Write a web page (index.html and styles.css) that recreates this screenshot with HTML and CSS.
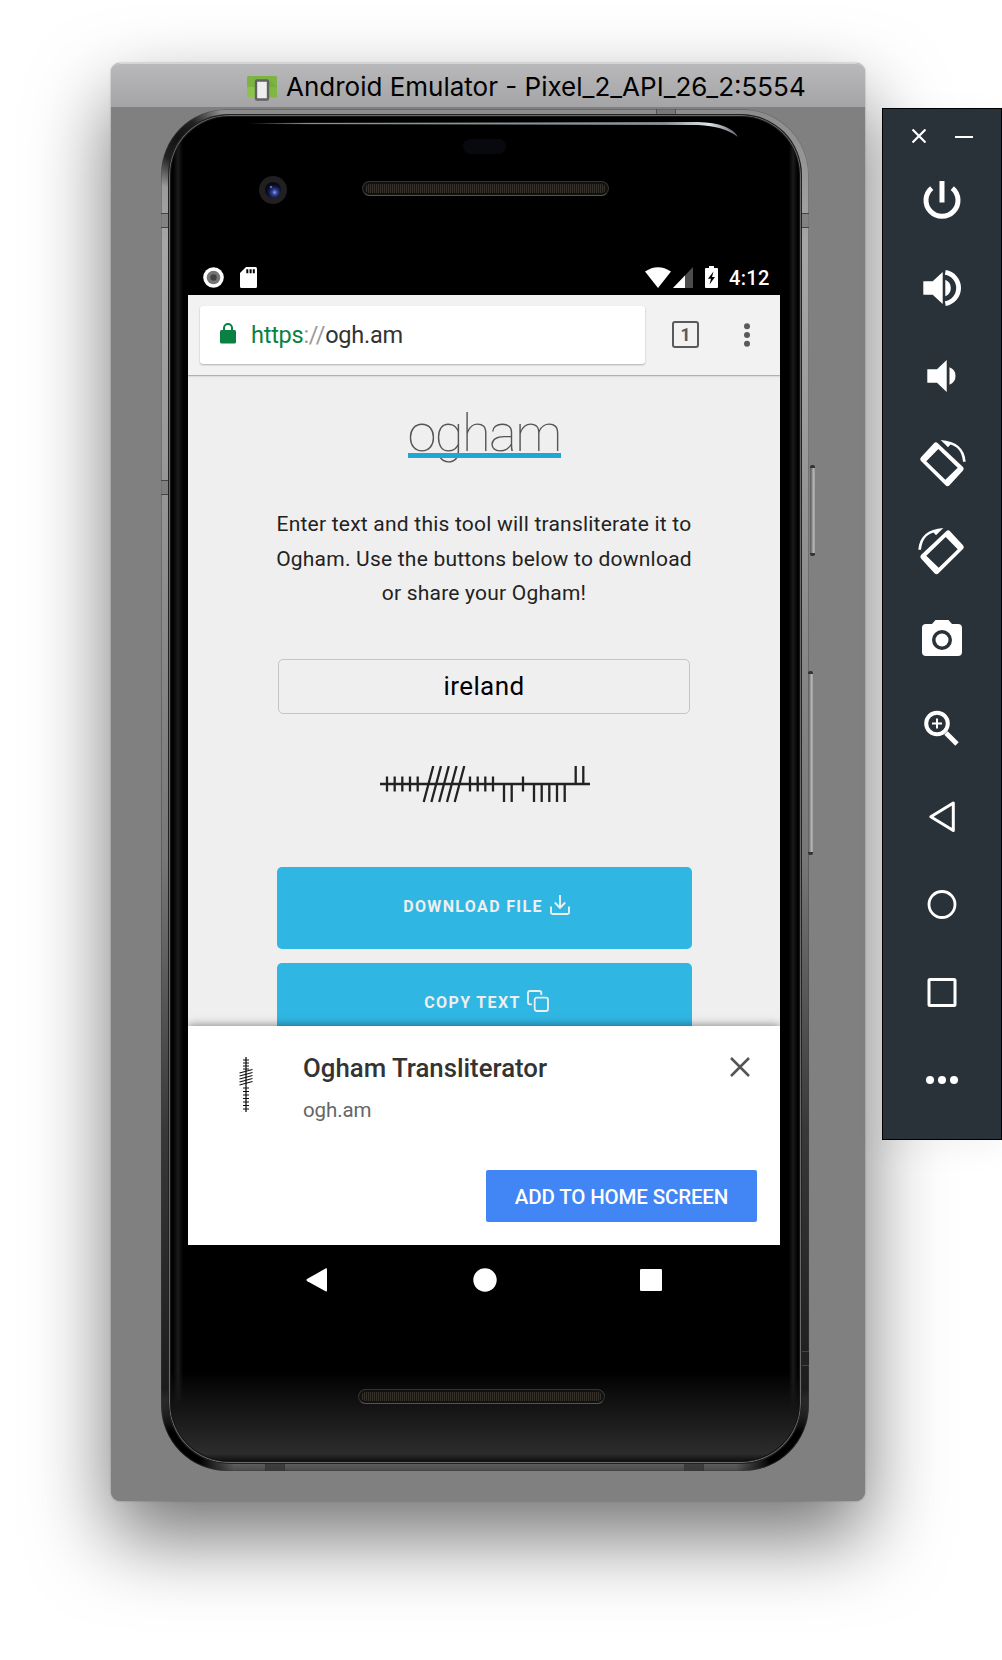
FILE: index.html
```html
<!DOCTYPE html>
<html lang="en">
<head>
<meta charset="utf-8">
<title>Android Emulator</title>
<link rel="stylesheet" href="styles.css">
</head>
<body>
<main class="desktop">
  <section class="window">
    <header class="titlebar">
      <svg class="app-icon" width="30" height="25" viewBox="0 0 30 25"><rect width="30" height="21.500" rx="1.500" fill="#8bc34a"/><path d="M0 11V1.500Q0 0 1.500 0h27Q30 0 30 1.500V11z" fill="#7cb342"/><path d="M22 4l8 7v10.500h-8z" fill="#6da137" opacity=".35"/><rect x="9" y="4.500" width="12" height="19" rx="1" fill="#eee" stroke="#616161" stroke-width="2.400"/></svg>
      <h1 class="window-title">Android Emulator - Pixel_2_API_26_2:5554</h1>
    </header>
    <div class="phone">
      <i class="band band-left"></i><i class="band band-right"></i><i class="band band-right low"></i><i class="band band-left mid"></i>
      <i class="seam seam-top"></i><i class="seam seam-bl"></i><i class="seam seam-br"></i>
      <i class="side-key power-key"></i><i class="side-key volume-key"></i>
      <div class="glass">
        <svg class="glare" width="500" height="20" viewBox="0 0 500 20"><defs><linearGradient id="g" x1="0" x2="1"><stop offset="0" stop-color="#889396" stop-opacity="0"/><stop offset=".12" stop-color="#889396"/><stop offset=".85" stop-color="#889396"/><stop offset=".94" stop-color="#dce5e8"/><stop offset="1" stop-color="#667" /></linearGradient></defs><path d="M0 2L450 1Q482 2 490 16Q476 5 450 4L0 3z" fill="url(#g)"/></svg>
        <i class="sensor"></i>
        <svg class="camera" width="28" height="28" viewBox="0 0 28 28"><defs><radialGradient id="c" cx=".6" cy=".65"><stop offset="0" stop-color="#8ea0f0"/><stop offset=".3" stop-color="#36469c"/><stop offset=".7" stop-color="#111a45"/><stop offset="1" stop-color="#080a18"/></radialGradient></defs><circle cx="14" cy="14" r="14" fill="#211f20"/><circle cx="14" cy="14" r="8" fill="url(#c)"/><circle cx="12" cy="11" r="1.300" fill="#5065bb"/></svg>
        <i class="speaker speaker-top"></i>
        <div class="statusbar">
          <svg width="21" height="21" viewBox="0 0 21 21"><circle cx="10.500" cy="10.500" r="10.300" fill="#fff"/><circle cx="10.500" cy="10.500" r="6.800" fill="#757575"/><circle cx="10.500" cy="10.500" r="3.200" fill="#424242"/></svg>
          <svg class="sd" width="17" height="21" viewBox="0 0 17 21"><path d="M6 0h9.500q1.500 0 1.500 1.500v18q0 1.500-1.500 1.500h-14Q0 21 0 19.500V6z" fill="#fff"/><path d="M6.300 2.300h2v4h-2zm3.300 0h2v4h-2zm3.200 0h2v4h-2z" fill="#000"/></svg>
          <span class="grow"></span>
          <svg width="26" height="21" viewBox="0 0 26 21"><path d="M0 4.500Q13-4 26 4.500L13 21z" fill="#fff"/></svg>
          <svg class="signal" width="20" height="21" viewBox="0 0 20 21"><path d="M20 0v21H0z" fill="#4d4d4d"/><path d="M12 8.400V21H0z" fill="#fff"/></svg>
          <svg class="battery" width="13" height="22" viewBox="0 0 13 22"><path d="M4 0h5v2h3q1 0 1 1v18q0 1-1 1H1q-1 0-1-1V3q0-1 1-1h3z" fill="#fff"/><path d="M8.500 5.500L3 12.700h3L4.500 18.500 10 11H7z" fill="#000"/></svg>
          <time class="clock">4:12</time>
        </div>
        <div class="screen">
          <div class="browser-bar">
            <div class="address">
              <svg width="16" height="21" viewBox="0 0 16 21"><path d="M4 8V5a4 4 0 0 1 8 0v3" fill="none" stroke="#0b8043" stroke-width="2"/><rect y="7" width="16" height="13.500" rx="1.500" fill="#0b8043"/></svg>
              <span class="url"><span class="scheme">https</span><span class="slashes">://</span>ogh.am</span>
            </div>
            <span class="tabs">1</span>
            <svg class="dots" width="6" height="24" viewBox="0 0 6 24" fill="#5a5a5a"><circle cx="3" cy="3.300" r="3"/><circle cx="3" cy="12" r="3"/><circle cx="3" cy="20.700" r="3"/></svg>
          </div>
          <div class="page">
            <h2 class="logo">ogham</h2>
            <p class="intro">Enter text and this tool will transliterate it to<br>Ogham. Use the buttons below to download<br>or share your Ogham!</p>
            <div class="field">ireland</div>
            <svg class="ogham" width="210" height="37" viewBox="0 0 210 37" fill="none" stroke="#222" stroke-width="2.300"><path d="M0 18H210M7 10.500V25.500M14.700 10.500V25.500M22.300 10.500V25.500M30 10.500V25.500M37.700 10.500V25.500M43.700 36L53.300 0M51.400 36L61 0M59.200 36L68.800 0M67 36L76.600 0M74.700 36L84.300 0M90 10.500V25.500M97.700 10.500V25.500M105.300 10.500V25.500M113 10.500V25.500M124 18V36M131.700 18V36M143 10.500V25.500M154 18V36M161.700 18V36M169.300 18V36M177 18V36M184.700 18V36M195.700 0V18M203.300 0V18"/></svg>
            <button class="action">Download file<svg class="download-icon" width="20" height="20" viewBox="0 0 20 20" fill="none" stroke="#efefef" stroke-width="1.900"><path d="M1 11.500V17.500Q1 19 2.500 19H17.500Q19 19 19 17.500V11.500M10 0V12.500M4.800 7.500L10 12.800 15.200 7.500"/></svg></button>
            <button class="action">Copy text<svg class="copy-icon" width="22" height="22" viewBox="0 0 22 22" fill="none" stroke="#efefef" stroke-width="1.800"><rect x="7.700" y="7.700" width="13.300" height="13.300" rx="2"/><path d="M5 14.300H3Q1 14.300 1 12.300V3Q1 1 3 1H12.300Q14.300 1 14.300 3V5"/></svg></button>
          </div>
          <div class="install">
            <svg class="site-icon" width="14" height="56" viewBox="0 0 14 56" stroke="#111" fill="none"><path stroke-width="1.300" d="M7 0V55"/><path stroke-width="1.200" d="M4 3H10M4 6H10M4 9H10M4 12H10M4 31H10M4 34.500H10M4 38H10M4 41.500H10M4 45H10M4 48.500H10M4 52H10M.5 16L13.500 12.500M.5 19L13.500 15.500M.5 22L13.500 18.500M.5 25L13.500 21.500M.5 28L13.500 24.500"/></svg>
            <div class="site">
              <h3 class="site-name">Ogham Transliterator</h3>
              <span class="site-host">ogh.am</span>
            </div>
            <svg class="dismiss" width="20" height="20" viewBox="0 0 20 20" stroke="#555" stroke-width="2.500"><path d="M1 1L19 19M19 1L1 19"/></svg>
            <button class="add">ADD TO HOME SCREEN</button>
          </div>
        </div>
        <nav class="navbar">
          <svg width="24" height="24" viewBox="0 0 24 24" fill="#fff"><path d="M1.400 10.700L19.500.6q1.500-.8 1.500 1v20.800q0 1.700-1.500.9L1.400 13.200q-2-1.200 0-2.500z"/></svg>
          <svg width="24" height="24" viewBox="0 0 24 24" fill="#fff"><circle cx="12" cy="12" r="11.700"/></svg>
          <svg width="24" height="24" viewBox="0 0 24 24" fill="#fff"><rect x="1" y="1" width="22" height="22" rx="1.200"/></svg>
        </nav>
        <i class="speaker speaker-bottom"></i>
      </div>
    </div>
  </section>

  <aside class="toolbar">
    <div class="controls">
      <svg width="14" height="14" viewBox="0 0 14 14" stroke="#fff" stroke-width="2.200"><path d="M.5.500l13 13M13.500.500l-13 13"/></svg>
      <svg width="18" height="14" viewBox="0 0 18 14" fill="#fff"><path d="M0 7h18v2H0z"/></svg>
    </div>
    <svg class="tool" viewBox="0 0 48 48" fill="none" stroke="#fff" stroke-width="5"><path d="M24 5V26.500"/><path d="M13.700 12.100A16 16 0 1 0 34.300 12.100"/></svg>
    <svg class="tool" viewBox="0 0 48 48" fill="#fff"><path d="M5.300 17.200h9.400L24.700 8v32l-10-9.300H5.300zM27.300 15.700a9 9 0 0 1 0 16.600z"/><path d="M27.300 8.400a15.800 15.800 0 0 1 0 31.200" fill="none" stroke="#fff" stroke-width="4.800"/></svg>
    <svg class="tool" viewBox="0 0 48 48" fill="#fff"><path d="M9.300 17.300H19L28.700 8v32L19 30.700H9.300zM31.500 15.300a9.300 9.300 0 0 1 0 17.400z"/></svg>
    <svg class="tool" viewBox="0 0 48 48" fill="#fff"><path id="rot" fill-rule="evenodd" d="M3 17.200L16 3.200q1.800-1.800 3.800 0L45 27q1.500 1.500 0 3.500L31.500 45.200q-2 2-4 0L3 21q-1.800-1.900 0-3.800zM8.300 21.300L27.300 39.700 39.700 27.700 20.300 9zM22.700 0Q46 1.500 47.700 21.700H45Q43.500 7.500 32.500 4.500L30 7.300z"/></svg>
    <svg class="tool" viewBox="0 0 48 48" fill="#fff"><use href="#rot" transform="matrix(-1 0 0 1 48 0)"/></svg>
    <svg class="tool" viewBox="0 0 48 48" fill="#fff"><path fill-rule="evenodd" d="M17.500 4h13l3.500 4h6q4 0 4 4v24q0 4-4 4H8q-4 0-4-4V12q0-4 4-4h6zM24 14a10 10 0 1 0 0 20 10 10 0 1 0 0-20z"/><circle cx="24" cy="24" r="6.500"/></svg>
    <svg class="tool" viewBox="0 0 48 48" fill="none" stroke="#fff"><circle cx="19" cy="18.500" r="10.800" stroke-width="4"/><path stroke-width="2" d="M14 18.500H24M19 13.500V23.500"/><path stroke-width="4.800" d="M28 28L39 39"/></svg>
    <svg class="tool" viewBox="0 0 48 48" fill="none" stroke="#fff" stroke-width="3" stroke-linejoin="round"><path d="M12.800 23.700L35.300 10V37.500z"/></svg>
    <svg class="tool" viewBox="0 0 48 48" fill="none" stroke="#fff" stroke-width="2.800"><circle cx="24" cy="23.500" r="13"/></svg>
    <svg class="tool" viewBox="0 0 48 48" fill="none" stroke="#fff" stroke-width="3"><rect x="11" y="10.500" width="26" height="26" rx="1"/></svg>
    <svg class="tool" viewBox="0 0 48 48" fill="#fff"><circle cx="12" cy="23" r="4"/><circle cx="24" cy="23" r="4"/><circle cx="36" cy="23" r="4"/></svg>
  </aside>
</main>
</body>
</html>
```
FILE: styles.css
```css
* { box-sizing: border-box; }
body { margin: 0; background: #fff; font-family: Roboto, "Liberation Sans", sans-serif; }
h1, h2, h3, p { margin: 0; }
svg { display: block; flex: none; }
button { border: 0; font-family: inherit; }
.desktop { position: relative; width: 1002px; height: 1660px; overflow: hidden; }

.window {
  position: absolute; left: 111px; top: 63px; width: 754px; height: 1438px;
  border-radius: 9px; background: #808080;
  box-shadow: 0 36px 80px rgba(0,0,0,.55), 0 0 2px rgba(0,0,0,.35);
}
.titlebar {
  display: flex; height: 44px; padding-left: 136px;
  border-radius: 9px 9px 0 0; border-top: 1px solid #d5d5d6;
  background: linear-gradient(#b9b9bb, #a4a4a6);
}
.app-icon { margin-top: 12px; }
.window-title {
  margin-left: 9px; font: 400 26px/45px Inter, sans-serif; color: #000;
  letter-spacing: 0; white-space: nowrap;
}

.phone {
  position: relative; margin: 2px 0 0 50px; width: 648px; height: 1362px; padding: 6px 8px 8px;
  border-radius: 66px;
  background:
    radial-gradient(circle at 18px 30px, #111 0, #222 22px, transparent 50px),
    radial-gradient(circle at 14px 1348px, #000 25px, transparent 60px),
    radial-gradient(circle at 634px 1348px, #000 25px, transparent 60px),
    linear-gradient(#8c8c8c 0, #a6a6a6 10%, #999 25%, #777 55%, #383838 75%, #1d1d1d 94%, #707072 99%, #4a4a4b);
  box-shadow: inset 0 0 0 1px rgba(60,60,60,.4);
}
.glass {
  position: relative; display: flex; flex-direction: column; height: 1348px;
  padding: 145px 21px 0 19px; border-radius: 60px;
  background:
    linear-gradient(90deg, #0a0a0a, #000 4px, #1b1b1b 9px, #000 14px, transparent 15px, transparent 619px, #000 620px, #1b1b1b 624px, #000 629px, #0a0a0a),
    #000;
  box-shadow: 0 0 0 1px #6a6a6a inset, 0 0 0 2px #161616 inset, 0 0 0 1px #222;
}
.glass::before {
  content: ""; position: absolute; inset: auto 2px 2px; height: 90px;
  border-radius: 0 0 58px 58px;
  background: linear-gradient(transparent, #141414 40%, #2c2c2c 92%, #111);
}
.glare { position: absolute; left: 79px; top: 6px; }
.sensor { position: absolute; left: 294px; top: 24px; width: 43px; height: 15px; border-radius: 8px; background: #08090f; }
.camera { position: absolute; left: 90px; top: 61px; }
.speaker {
  position: absolute; width: 247px; height: 15px; border-radius: 8px;
  border: 1px solid #333330; border-bottom-color: #555550;
  background: repeating-linear-gradient(90deg, #171612 0 1px, #35312a 1px 2px);
  box-shadow: inset 0 0 0 2px #111;
}
.speaker-top { left: 193px; top: 66px; }
.speaker-bottom { left: 189px; top: 1274px; }
.band { position: absolute; width: 9px; height: 15px; background: #777b; border: solid #444; border-width: 1px 0; }
.band-left { left: 0; top: 104px; }
.band-right { right: 0; top: 104px; }
.band.low { top: 1242px; background: #222; }
.band.mid { top: 371px; }
.seam { position: absolute; width: 20px; height: 8px; background: #6668; border: solid #3338; border-width: 0 1px; }
.seam-top { left: 495px; top: 0; }
.seam-bl { left: 104px; bottom: 0; background: #333b; }
.seam-br { left: 523px; bottom: 0; background: #333b; }
.side-key {
  position: absolute; width: 5px; border-radius: 2px; border: solid #333; border-width: 3px 0;
  background: linear-gradient(90deg, #666 1px, #8b8b8b 2px, #c0c0c0 4px, #888);
}
.power-key { left: 649px; top: 356px; height: 91px; }
.volume-key { left: 647px; top: 562px; height: 184px; }

.statusbar { display: flex; align-items: flex-start; height: 35px; padding: 7px 10px 0 15px; }
.statusbar .sd { margin-left: 16px; }
.grow { flex: 1; }
.signal { margin-left: 2px; }
.battery { margin-left: 12px; margin-top: -1px; }
.clock { width: 41px; margin-left: 11px; color: #fff; font-weight: 500; font-size: 20px; line-height: 23px; letter-spacing: .3px; }

.screen { position: relative; height: 950px; flex: none; width: 592px; background: #efefef; overflow: hidden; display: flex; flex-direction: column; }
.browser-bar {
  display: flex; align-items: center; height: 81px; flex: none; padding: 0 30px 1px 12px;
  background: #f2f2f2; border-bottom: 1px solid #b2b2b2; box-shadow: 0 1px 1px #ddd;
}
.address {
  display: flex; align-items: center; width: 445px; height: 58px; padding: 0 20px 2px;
  border-radius: 3px; background: #fff; box-shadow: 0 1px 2px rgba(0,0,0,.28);
}
.url { margin: 2px 0 0 15px; color: #333; font-size: 23.500px; letter-spacing: -.25px; white-space: nowrap; }
.scheme { color: #0b8043; }
.slashes { color: #999; }
.tabs {
  width: 27px; height: 27px; margin-left: 27px; border: 2.500px solid #5a5a5a; border-radius: 3px;
  color: #5a5a5a; font-weight: 700; font-size: 17.500px; line-height: 24px; text-align: center;
}
.dots { margin-left: auto; }

.page { display: flex; flex-direction: column; align-items: center; width: 592px; flex: 1; }
.logo { position: relative; margin-top: 26px; width: 153px; font-size: 52.500px; line-height: 62px; font-weight: 250; letter-spacing: -1.600px; color: #555; white-space: nowrap; }
.logo::after { content: ""; position: absolute; left: 0; right: 0; top: 51px; height: 4.500px; background: #1fa6d3; }
.intro { margin-top: 43px; font-size: 21px; line-height: 34.700px; color: #222; text-align: center; letter-spacing: .22px; white-space: nowrap; }
.field { margin-top: 48px; width: 412px; height: 55px; border: 1.500px solid #c5c5c5; border-radius: 5px; text-align: center; color: #000; font-size: 26px; line-height: 52px; letter-spacing: .4px; }
.ogham { margin: 52px 0 64px 2px; }
.action {
  display: flex; justify-content: center; width: 415px; height: 82px; margin-bottom: 14px; padding: 30px 0 0 5px; flex: none;
  border-radius: 5px; background: #30b6e3; color: #efefef; text-transform: uppercase;
  font-weight: 700; font-size: 16px; line-height: 19px; letter-spacing: 1.350px;
}
.download-icon { margin: -2px 0 0 7px; }
.copy-icon { margin: -3px 0 0 6px; }

.install {
  position: absolute; left: 0; bottom: 0; width: 592px; height: 219px;
  display: grid; grid-template-columns: 64px 1fr 20px; grid-template-rows: 144px 52px;
  padding: 0 30px 0 51px; background: #fff; box-shadow: 0 0 9px rgba(0,0,0,.5);
}
.site-icon { margin-top: 31px; }
.site { padding-top: 26px; display: flex; flex-direction: column; gap: 13px; }
.site-name { font-size: 25.800px; line-height: 32px; font-weight: 500; color: #333; white-space: nowrap; }
.site-host { color: #666; font-size: 20.500px; line-height: 27px; letter-spacing: -.1px; }
.dismiss { margin-top: 31px; }
.add {
  grid-column: 1 / -1; justify-self: end; width: 271px; height: 52px; margin-right: -7px; padding: 2px 0 0;
  background: #4285f4; color: #fff; border-radius: 2px; font-size: 20.500px; font-weight: 500; letter-spacing: -.15px; white-space: nowrap;
}
.navbar { display: flex; justify-content: space-between; width: 357px; margin: 23px 0 0 118px; }

.toolbar {
  position: absolute; left: 882px; top: 108px; width: 120px; height: 1032px;
  display: flex; flex-direction: column; align-items: center;
  border: 1px solid #000; background: #293238;
  box-shadow: 0 8px 30px rgba(0,0,0,.05);
}
.controls { display: flex; justify-content: space-between; width: 61px; margin: 20px 0 33px 1px; flex: none; }
.tool { width: 48px; height: 48px; margin-bottom: 40.100px; }
```
